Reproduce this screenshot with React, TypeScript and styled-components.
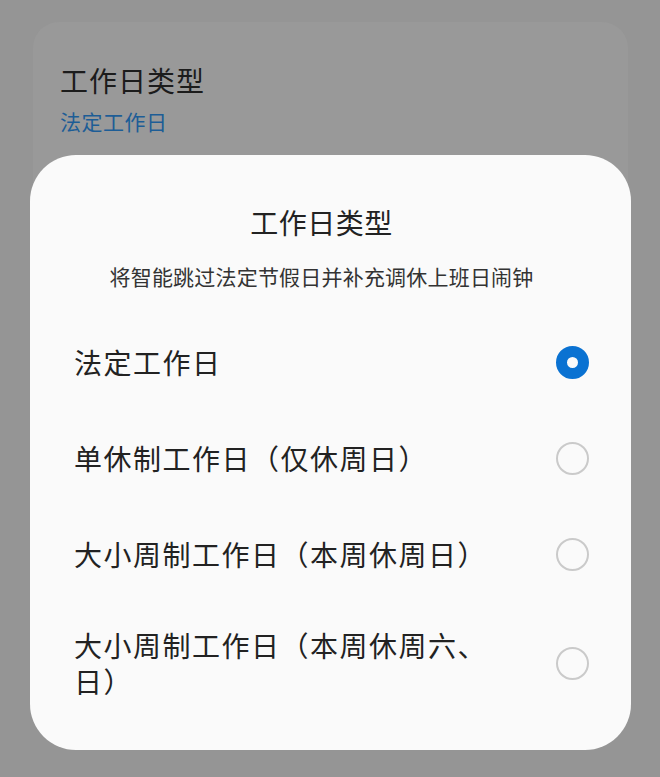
import React from "react";
import styled, { createGlobalStyle } from "styled-components";

const Global = createGlobalStyle`
  html, body { margin: 0; padding: 0; background: #959595; }
  body { font-family: "Noto Sans CJK SC", "Noto Sans", sans-serif; }
  * { box-sizing: border-box; }
`;

const Page = styled.div`
  position: relative;
  width: 660px;
  height: 777px;
  overflow: hidden;
  background: #959595;
  padding-top: 22px;
`;

const BackCard = styled.section`
  margin: 0 32px 0 33px;
  height: 700px;
  background: #999999;
  border-radius: 26px;
  padding: 38px 27px 0;
  display: flex;
  flex-direction: column;
  gap: 7px;
`;

const BackTitle = styled.div`
  font-size: 28px;
  letter-spacing: 1px;
  line-height: 40px;
  color: #1c1c1c;
`;

const BackValue = styled.div`
  font-size: 21px;
  letter-spacing: 0.5px;
  line-height: 28px;
  color: #1d5d96;
`;

const Dialog = styled.div`
  position: absolute;
  top: 155px;
  left: 30px;
  width: 601px;
  background: #fafafa;
  border-radius: 46px;
  padding: 47px 42px 26px 44px;
  display: flex;
  flex-direction: column;
`;

const Header = styled.header`
  margin-right: 20px;
  display: flex;
  flex-direction: column;
  align-items: center;
`;

const Title = styled.h2`
  margin: 0;
  font-size: 28px;
  letter-spacing: 0.5px;
  line-height: 40px;
  font-weight: 400;
  color: #222;
`;

const Subtitle = styled.p`
  margin: 18px 0 22px;
  font-size: 21px;
  letter-spacing: 0.2px;
  line-height: 32px;
  color: #333;
`;

const OptionList = styled.div`
  display: flex;
  flex-direction: column;
`;

const Option = styled.label`
  display: flex;
  align-items: center;
  min-height: 96px;
  padding: 25px 0;
`;

const OptionText = styled.span`
  flex: 1;
  max-width: 432px;
  margin-right: auto;
  font-size: 28px;
  letter-spacing: 1.5px;
  line-height: 36px;
  color: #222;
`;

const Radio = styled.span<{ $checked: boolean }>`
  flex: none;
  width: 33px;
  height: 33px;
  border-radius: 50%;
  margin-left: 20px;
  background: ${(p) => (p.$checked ? "#fafafa" : "transparent")};
  border: ${(p) => (p.$checked ? "11px solid #0a72d2" : "2px solid #cacaca")};
`;

const options = [
  "法定工作日",
  "单休制工作日（仅休周日）",
  "大小周制工作日（本周休周日）",
  "大小周制工作日（本周休周六、日）",
];

export default function App() {
  const selected = 0;
  return (
    <Page>
      <Global />
      <BackCard>
        <BackTitle>工作日类型</BackTitle>
        <BackValue>法定工作日</BackValue>
      </BackCard>
      <Dialog>
        <Header>
          <Title>工作日类型</Title>
          <Subtitle>将智能跳过法定节假日并补充调休上班日闹钟</Subtitle>
        </Header>
        <OptionList>
          {options.map((o, i) => (
            <Option key={o}>
              <OptionText>{o}</OptionText>
              <Radio $checked={i === selected} />
            </Option>
          ))}
        </OptionList>
      </Dialog>
    </Page>
  );
}
